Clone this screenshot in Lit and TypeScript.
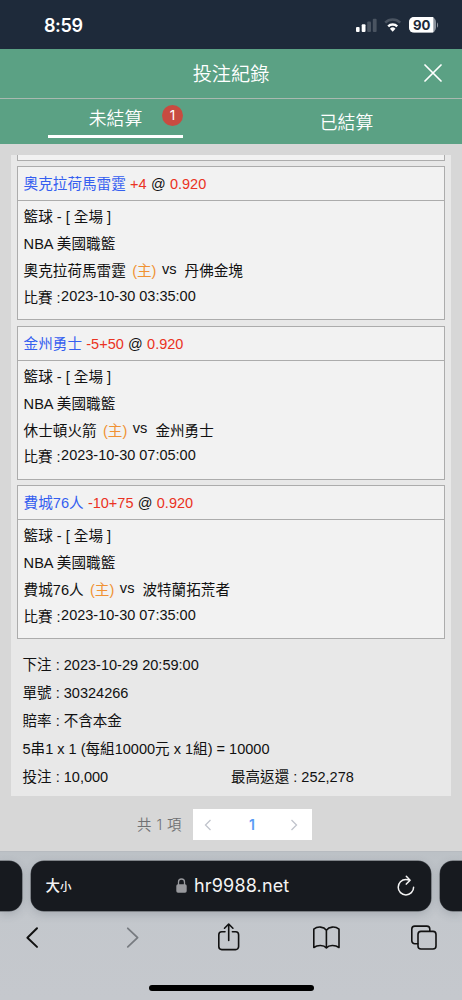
import { LitElement, html, css, svg } from "lit";
import { customElement, property } from "lit/decorators.js";

interface Bet {
  pick: string;
  line: string;
  odds: string;
  home: string;
  away: string;
  time: string;
}

const BETS: Bet[] = [
  { pick: "奧克拉荷馬雷霆", line: "+4", odds: "0.920", home: "奧克拉荷馬雷霆", away: "丹佛金塊", time: "2023-10-30 03:35:00" },
  { pick: "金州勇士", line: "-5+50", odds: "0.920", home: "休士頓火箭", away: "金州勇士", time: "2023-10-30 07:05:00" },
  { pick: "費城76人", line: "-10+75", odds: "0.920", home: "費城76人", away: "波特蘭拓荒者", time: "2023-10-30 07:35:00" },
];

@customElement("status-bar")
class StatusBar extends LitElement {
  static styles = css`
    :host {
      display: flex;
      box-sizing: border-box;
      height: 49px;
      padding: 0 23px 0 44px;
      justify-content: space-between;
      background: #1e2a3a;
      color: #fff;
    }
    .clock {
      font: 600 18px/51px Inter, sans-serif;
      letter-spacing: -0.4px;
    }
    svg { display: block; margin-top: 16px; }
    .pct { font: 700 13.2px Inter, sans-serif; }
  `;
  render() {
    return html`
      <div class="clock">8:59</div>
      <svg width="84" height="18" viewBox="355 16 84 18">
        ${svg`
        <rect x="356" y="27" width="3.6" height="5" rx="1" fill="#fff"/>
        <rect x="361.7" y="24.3" width="3.8" height="7.7" rx="1" fill="#fff"/>
        <rect x="367.2" y="21.5" width="3.8" height="10.5" rx="1" fill="#4a5461"/>
        <rect x="372.8" y="18.7" width="3.8" height="13.3" rx="1" fill="#4a5461"/>
        <g fill="none" stroke-width="2.5">
          <path d="M385.2 22.7a10.6 10.6 0 0 1 15 0" stroke="#4a5461"/>
          <path d="M388.2 26.4a6.4 6.4 0 0 1 9 0" stroke="#fff"/>
        </g>
        <path d="M389.9 28.7a4 4 0 0 1 5.6 0L392.7 31.7z" fill="#fff"/>
        <rect x="409" y="17" width="27" height="15.6" rx="5" fill="#8a929c"/>
        <path d="M414 17h19.3v15.6H414a5 5 0 0 1-5-5V22a5 5 0 0 1 5-5z" fill="#fff"/>
        <path d="M437 22.5c1.4.6 1.4 4.6 0 5.2z" fill="#8a929c"/>
        <text class="pct" x="421.7" y="29.8" text-anchor="middle" fill="#1e2a3a">90</text>`}
      </svg>
    `;
  }
}

@customElement("bet-card")
class BetCard extends LitElement {
  @property({ attribute: false }) bet!: Bet;
  static styles = css`
    :host {
      display: block;
      box-sizing: border-box;
      height: 154px;
      margin-bottom: 5.5px;
      border: 1px solid #acacac;
      background: #f2f2f2;
    }
    .head {
      display: flex;
      gap: 4.3px;
      height: 33px;
      padding-left: 5.6px;
      border-bottom: 1px solid #acacac;
      line-height: 34px;
    }
    .body { padding: 3.4px 0 0 5.6px; line-height: 26.7px; }
    .row { display: flex; height: 26.7px; white-space: pre; }
    .cjk { font-size: 14.6px; }
    .pick { color: #355ff0; font-size: 14.6px; }
    .red { color: #ea3323; }
    .home { color: #f09234; margin-left: 6.4px; }
    .vs { margin: -2px 8px 0 5.5px; }
    .time { margin-top: -1.5px; }
    .label { width: 37.5px; }
    .drop { padding-top: 0.4px; }
  `;
  render() {
    const b = this.bet;
    return html`
      <div class="head">
        <span class="pick">${b.pick}</span><span class="red">${b.line}</span><span>@</span><span class="red">${b.odds}</span>
      </div>
      <div class="body">
        <div class="row cjk">籃球 - [ 全場 ]</div>
        <div class="row cjk">NBA 美國職籃</div>
        <div class="row cjk"><span class="drop">${b.home}</span><span class="home drop">(主)</span><span class="vs">vs</span><span class="drop">${b.away}</span></div>
        <div class="row"><span class="label drop">比賽 :</span><span class="time">${b.time}</span></div>
      </div>
    `;
  }
}

@customElement("browser-bar")
class BrowserBar extends LitElement {
  static styles = css`
    :host {
      display: flex;
      flex-direction: column;
      box-sizing: border-box;
      height: 149px;
      padding-top: 8.5px;
      overflow: hidden;
      background: linear-gradient(#bcc1c6, #c3c7cc 35%, #c5c8cd);
      border-top: 1px solid #b7bbc0;
    }
    .tabs { display: grid; grid-template-columns: 22px 400px 22px; gap: 9px; height: 49px; flex: none; }
    .tab {
      box-sizing: border-box;
      background: #171a1f;
      border-radius: 13px;
      box-shadow: 0 0 0 0.5px #4a4e53, 0 3px 10px rgba(60, 70, 80, 0.22);
    }
    .left { border-radius: 0 13px 13px 0; }
    .right { border-radius: 13px 0 0 13px; }
    .address {
      display: grid;
      grid-template-columns: 110px 1fr 110px;
      align-items: center;
      color: #f4f4f4;
    }
    .size { padding-left: 14.5px; font: 500 14.5px/48px "Noto Sans CJK TC", sans-serif; }
    .small { font-size: 11.5px; }
    .url {
      display: flex;
      align-items: center;
      justify-content: center;
      gap: 7.5px;
      padding-left: 3px;
      font: 400 18px/50px Inter, sans-serif;
      letter-spacing: 0.15px;
    }
    .reload { justify-self: end; margin-right: 15px; }
    .tools { display: block; flex: none; }
    .home { width: 165px; height: 6px; margin: 21.5px auto 0; border-radius: 3px; background: #000; flex: none; }
    svg { display: block; }
  `;
  render() {
    return html`
      <div class="tabs">
        <div class="tab left"></div>
        <div class="tab address">
          <div class="size">大<span class="small">小</span></div>
          <div class="url">
            <svg width="11" height="15" viewBox="0 0 11 15"><rect x=".3" y="6.3" width="10.4" height="8.4" rx="1.7" fill="#98999d"/><path d="M2.5 7V4a3 3 0 0 1 6 0v3" fill="none" stroke="#98999d" stroke-width="1.3"/></svg>
            <span>hr9988.net</span>
          </div>
          <svg class="reload" width="20" height="22" viewBox="396 874 20 22" fill="none" stroke="#f4f4f4" stroke-width="1.5" stroke-linecap="round" stroke-linejoin="round"><path d="M413.6 886.2a7.7 7.7 0 1 1-7.7-7.7c1.4 0 2.6.3 3.6.8M406.3 875.2l3.8 4-3.8 3.9"/></svg>
        </div>
        <div class="tab right"></div>
      </div>
      <svg class="tools" width="462" height="54" viewBox="0 910 462 54" fill="none" stroke="#111" stroke-width="1.8" stroke-linecap="round" stroke-linejoin="round">
        <path d="M37 928.3l-9.6 9.4 9.6 9.2" stroke-width="2"/>
        <path d="M127.8 928.3l9.8 9.4-9.8 9.2" stroke="#777b80"/>
        <path d="M225 931.8h-3.2a3 3 0 0 0-3 3v11.8a3 3 0 0 0 3 3h13.8a3 3 0 0 0 3-3v-11.8a3 3 0 0 0-3-3h-3.2M228.7 940.5v-16M224.5 928.2l4.2-4.2 4.2 4.2" stroke-width="1.6"/>
        <path d="M326.4 930.2c-2.6-3.6-8.7-4.3-12.6-1v18.3c3.9-2.8 10-2.6 12.6.4c2.6-3 8.7-3.2 12.6-.4v-18.3c-3.9-3.3-10-2.6-12.6 1zV947.6" stroke-width="1.6"/>
        <path d="M417.8 943.8h-3a3 3 0 0 1-3-3v-11.7a3 3 0 0 1 3-3h12a3 3 0 0 1 3 3v2.2" stroke-width="1.6"/>
        <rect x="418" y="931.4" width="18" height="17.6" rx="3" stroke-width="1.6"/>
      </svg>
      <div class="home"></div>
    `;
  }
}

@customElement("app-root")
class AppRoot extends LitElement {
  static styles = css`
    :host {
      display: flex;
      flex-direction: column;
      width: 462px;
      height: 1000px;
      overflow: hidden;
      background: #d7d7d7;
      color: #111;
      font: 14.5px "Liberation Sans", "Noto Sans CJK TC", sans-serif;
    }
    .title {
      display: grid;
      grid-template-columns: 60px 1fr 60px;
      align-items: center;
      height: 49px;
      background: #5ba184;
      border-bottom: 1px solid #a9b9b0;
      color: #fff;
    }
    .title-text {
      text-align: center;
      font: 350 19.2px/49px "Noto Sans CJK TC", sans-serif;
    }
    .close { display: block; justify-self: end; margin: 0 20px 2px 0; }
    .tabs {
      display: grid;
      grid-template-columns: 1fr 1fr;
      height: 45px;
      background: #5ba184;
      color: #fff;
      font: 350 17.8px/38px "Noto Sans CJK TC", sans-serif;
      text-align: center;
    }
    .tab-active {
      position: relative;
      box-sizing: border-box;
      height: 39px;
      width: 135px;
      margin-left: 48px;
      border-bottom: 3px solid #fff;
      line-height: 37px;
    }
    .badge {
      position: absolute;
      right: 0;
      top: 6px;
      width: 21px;
      height: 21px;
      border-radius: 50%;
      background: #c84b40;
      font: 400 13.5px/21px Inter, sans-serif;
    }
    .tab-idle { line-height: 44px; }
    .panel {
      display: block;
      box-sizing: border-box;
      height: 641px;
      margin: 11px 11px 0;
      padding: 0 6px;
      background: #e8e8e8;
    }
    .clipped {
      box-sizing: border-box;
      height: 5.5px;
      margin-bottom: 5.5px;
      background: #f2f2f2;
      border: 1px solid #acacac;
      border-top: 0;
    }
    .summary {
      padding: 6.5px 0 0 5.5px;
      font-size: 14.55px;
      line-height: 28px;
    }
    .stake { display: grid; grid-template-columns: 208.5px 1fr; }
    .pager {
      display: flex;
      align-items: center;
      justify-content: flex-end;
      height: 31px;
      margin: 13px 150px 0 0;
    }
    .total {
      margin-right: 11px;
      color: #707173;
      font: 350 14.4px/30px Inter, "Noto Sans CJK TC", sans-serif;
      letter-spacing: 0.5px;
    }
    .pages {
      display: grid;
      grid-template-columns: 1fr 1fr 1fr;
      align-items: center;
      justify-items: center;
      width: 119px;
      height: 31px;
      background: #fff;
    }
    .page { color: #599bf5; font: 600 14px/31px Inter, sans-serif; margin-right: 1px; }
    .prev { margin-right: 9px; }
    .next { margin-left: 4px; }
    browser-bar { margin-top: auto; }
  `;
  render() {
    return html`
      <status-bar></status-bar>
      <div class="title">
        <span></span>
        <div class="title-text">投注紀錄</div>
        <svg class="close" width="18" height="18" viewBox="0 0 18 18"><path d="M1 1l16 16M17 1L1 17" stroke="#fff" stroke-width="1.7" stroke-linecap="round"/></svg>
      </div>
      <div class="tabs">
        <div class="tab-active">未結算<span class="badge">1</span></div>
        <div class="tab-idle">已結算</div>
      </div>
      <main class="panel">
        <div class="clipped"></div>
        ${BETS.map((bet) => html`<bet-card .bet=${bet}></bet-card>`)}
        <div class="summary">
          <div>下注 : 2023-10-29 20:59:00</div>
          <div>單號 : 30324266</div>
          <div>賠率 : 不含本金</div>
          <div>5串1 x 1 (每組10000元 x 1組) = 10000</div>
          <div class="stake"><span>投注 : 10,000</span><span>最高返還 : 252,278</span></div>
        </div>
      </main>
      <div class="pager">
        <div class="total">共 1 項</div>
        <div class="pages">
          <svg class="prev" width="8" height="12" viewBox="0 0 8 12"><path d="M6.5 1L1.5 6l5 5" fill="none" stroke="#c0c4cc" stroke-width="1.3"/></svg>
          <span class="page">1</span>
          <svg class="next" width="8" height="12" viewBox="0 0 8 12"><path d="M1.5 1l5 5-5 5" fill="none" stroke="#c0c4cc" stroke-width="1.3"/></svg>
        </div>
      </div>
      <browser-bar></browser-bar>
    `;
  }
}
